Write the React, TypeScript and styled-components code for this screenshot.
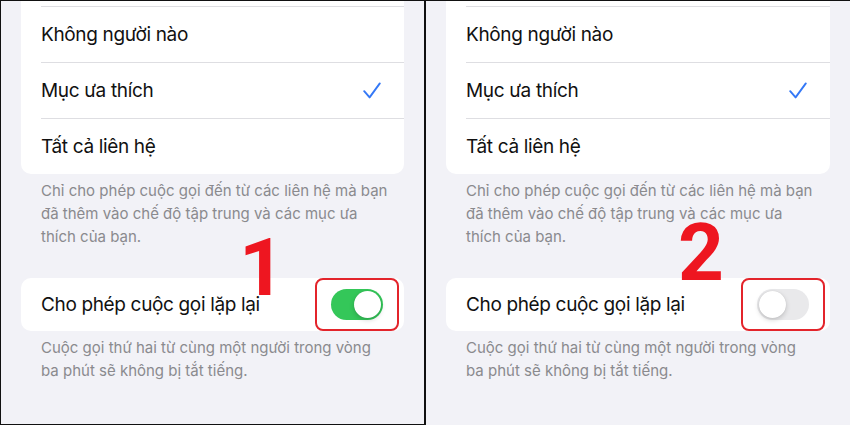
import React from "react";
import styled, { createGlobalStyle } from "styled-components";

const GlobalStyle = createGlobalStyle`
  html, body { margin: 0; padding: 0; background: #000; }
  * { box-sizing: border-box; }
`;

const Frame = styled.div`
  width: 850px;
  height: 425px;
  display: flex;
  align-items: flex-start;
  gap: 2px;
  padding: 1px 0 0 1px;
  background: #111;
  overflow: hidden;
  font-family: Inter, "Noto Sans", sans-serif;
`;

const Panel = styled.div<{ $w: number; $h: number }>`
  position: relative;
  width: ${(p) => p.$w}px;
  height: ${(p) => p.$h}px;
  background: #f2f2f7;
  padding: 0 20px;
  overflow: hidden;
`;

const Card = styled.div<{ $cut?: boolean }>`
  background: #fff;
  border-radius: ${(p) => (p.$cut ? "0 0 10px 10px" : "10px")};
  padding-top: ${(p) => (p.$cut ? "5px" : "0")};
  margin-top: ${(p) => (p.$cut ? "0" : "30px")};
`;

const Row = styled.div<{ $line?: boolean; $h?: number }>`
  display: flex;
  align-items: center;
  justify-content: space-between;
  height: ${(p) => (p.$h ?? 55) + (p.$line ? 1 : 0)}px;
  margin-left: 20px;
  padding-right: 23px;
  border-top: ${(p) => (p.$line ? "1px solid #dedee2" : "none")};
  font-size: 19px;
  color: #111;
  letter-spacing: -0.35px;
`;

const ToggleRow = styled(Row)`
  padding-right: 5px;
`;

const Footer = styled.div`
  padding: 5px 0 0 20px;
  font-size: 15px;
  line-height: 23px;
  color: #8a8a8e;
  white-space: nowrap;
`;

const Highlight = styled.div`
  border: 2px solid #e3242b;
  border-radius: 8px;
  padding: 9px 14px;
  display: flex;
`;

const Track = styled.div<{ $on: boolean }>`
  width: 52px;
  height: 31px;
  border-radius: 16px;
  padding: 2px;
  display: flex;
  justify-content: ${(p) => (p.$on ? "flex-end" : "flex-start")};
  background: ${(p) => (p.$on ? "#34c759" : "#e9e9eb")};
`;

const Knob = styled.div`
  width: 27px;
  height: 27px;
  border-radius: 50%;
  background: #fff;
  box-shadow: 0 2px 5px rgba(0, 0, 0, 0.18), 0 0 1px rgba(0, 0, 0, 0.12);
`;

const Step = styled.div<{ $x: number; $y: number }>`
  position: absolute;
  left: ${(p) => p.$x}px;
  top: ${(p) => p.$y}px;
  font-family: Roboto, "Liberation Sans", sans-serif;
  font-weight: 700;
  font-size: 80px;
  line-height: 1;
  color: #ee1620;
`;

const Check = () => (
  <svg width="18" height="17" viewBox="0 0 18 17">
    <path d="M1.2 9.2 L6.6 15.4 L16.8 1.4" fill="none" stroke="#3478f6" strokeWidth="1.9" strokeLinecap="round" strokeLinejoin="round" />
  </svg>
);

const options = ["Không người nào", "Mục ưa thích", "Tất cả liên hệ"];
const note1 = [
  "Chỉ cho phép cuộc gọi đến từ các liên hệ mà bạn",
  "đã thêm vào chế độ tập trung và các mục ưa",
  "thích của bạn.",
];
const note2 = ["Cuộc gọi thứ hai từ cùng một người trong vòng", "ba phút sẽ không bị tắt tiếng."];

function Screen({ on, step, w, h, sx, sy }: { on: boolean; step: string; w: number; h: number; sx: number; sy: number }) {
  return (
    <Panel $w={w} $h={h}>
      <Card $cut>
        {options.map((o, i) => (
          <Row key={o} $line>
            <span>{o}</span>
            {i === 1 && <Check />}
          </Row>
        ))}
      </Card>
      <Footer>
        {note1.map((l) => (
          <div key={l}>{l}</div>
        ))}
      </Footer>
      <Card>
        <ToggleRow $h={53}>
          <span>Cho phép cuộc gọi lặp lại</span>
          <Highlight>
            <Track $on={on}>
              <Knob />
            </Track>
          </Highlight>
        </ToggleRow>
      </Card>
      <Footer>
        {note2.map((l) => (
          <div key={l}>{l}</div>
        ))}
      </Footer>
      <Step $x={sx} $y={sy}>{step}</Step>
    </Panel>
  );
}

export default function App() {
  return (
    <>
      <GlobalStyle />
      <Frame>
        <Screen on step="1" w={423} h={423} sx={238} sy={227} />
        <Screen on={false} step="2" w={424} h={424} sx={252} sy={212} />
      </Frame>
    </>
  );
}
